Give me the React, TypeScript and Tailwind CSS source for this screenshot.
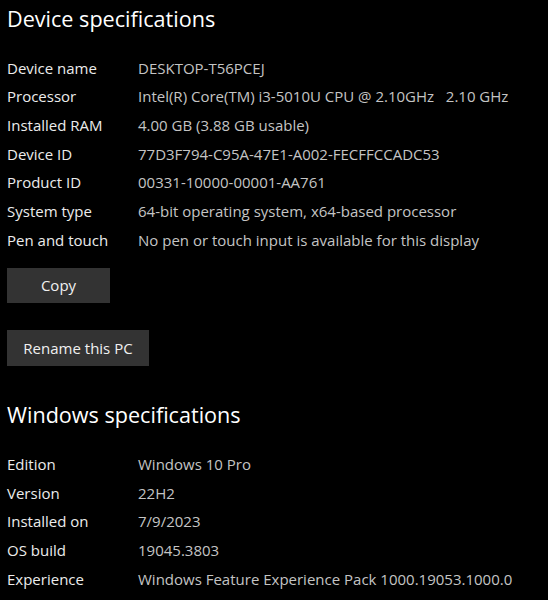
import React from "react";

const device: [string, string][] = [
  ["Device name", "DESKTOP-T56PCEJ"],
  ["Processor", "Intel(R) Core(TM) i3-5010U CPU @ 2.10GHz   2.10 GHz"],
  ["Installed RAM", "4.00 GB (3.88 GB usable)"],
  ["Device ID", "77D3F794-C95A-47E1-A002-FECFFCCADC53"],
  ["Product ID", "00331-10000-00001-AA761"],
  ["System type", "64-bit operating system, x64-based processor"],
  ["Pen and touch", "No pen or touch input is available for this display"],
];

const windows: [string, string][] = [
  ["Edition", "Windows 10 Pro"],
  ["Version", "22H2"],
  ["Installed on", "7/9/2023"],
  ["OS build", "19045.3803"],
  ["Experience", "Windows Feature Experience Pack 1000.19053.1000.0"],
];

function Rows({ rows }: { rows: [string, string][] }) {
  return (
    <div className="flex flex-col">
      {rows.map(([k, v]) => (
        <div key={k} className="flex h-[28.7px] items-center text-[15px] whitespace-pre">
          <div className="w-[131px] shrink-0 text-[#ececec]">{k}</div>
          <div className="text-[#c4c4c4]">{v}</div>
        </div>
      ))}
    </div>
  );
}

export default function App() {
  return (
    <div
      className="w-[548px] h-[600px] overflow-hidden bg-black pl-[7px] pt-[4px]"
      style={{ fontFamily: '"Open Sans", "Noto Sans", sans-serif' }}
    >
      <div className="h-[30px] leading-[30px] text-[21.6px] text-white">Device specifications</div>
      <div className="h-[19.6px]" />
      <Rows rows={device} />
      <div className="mt-[13.5px] flex h-[35px] w-[103px] items-center justify-center bg-[#333333] text-[15px] text-[#f0f0f0]">
        Copy
      </div>
      <div className="mt-[27px] flex h-[36px] w-[142px] items-center justify-center bg-[#333333] text-[15px] text-[#f0f0f0]">
        Rename this PC
      </div>
      <div className="mt-[34px] h-[30px] leading-[30px] text-[21.6px] text-white">Windows specifications</div>
      <div className="h-[20px]" />
      <Rows rows={windows} />
    </div>
  );
}
